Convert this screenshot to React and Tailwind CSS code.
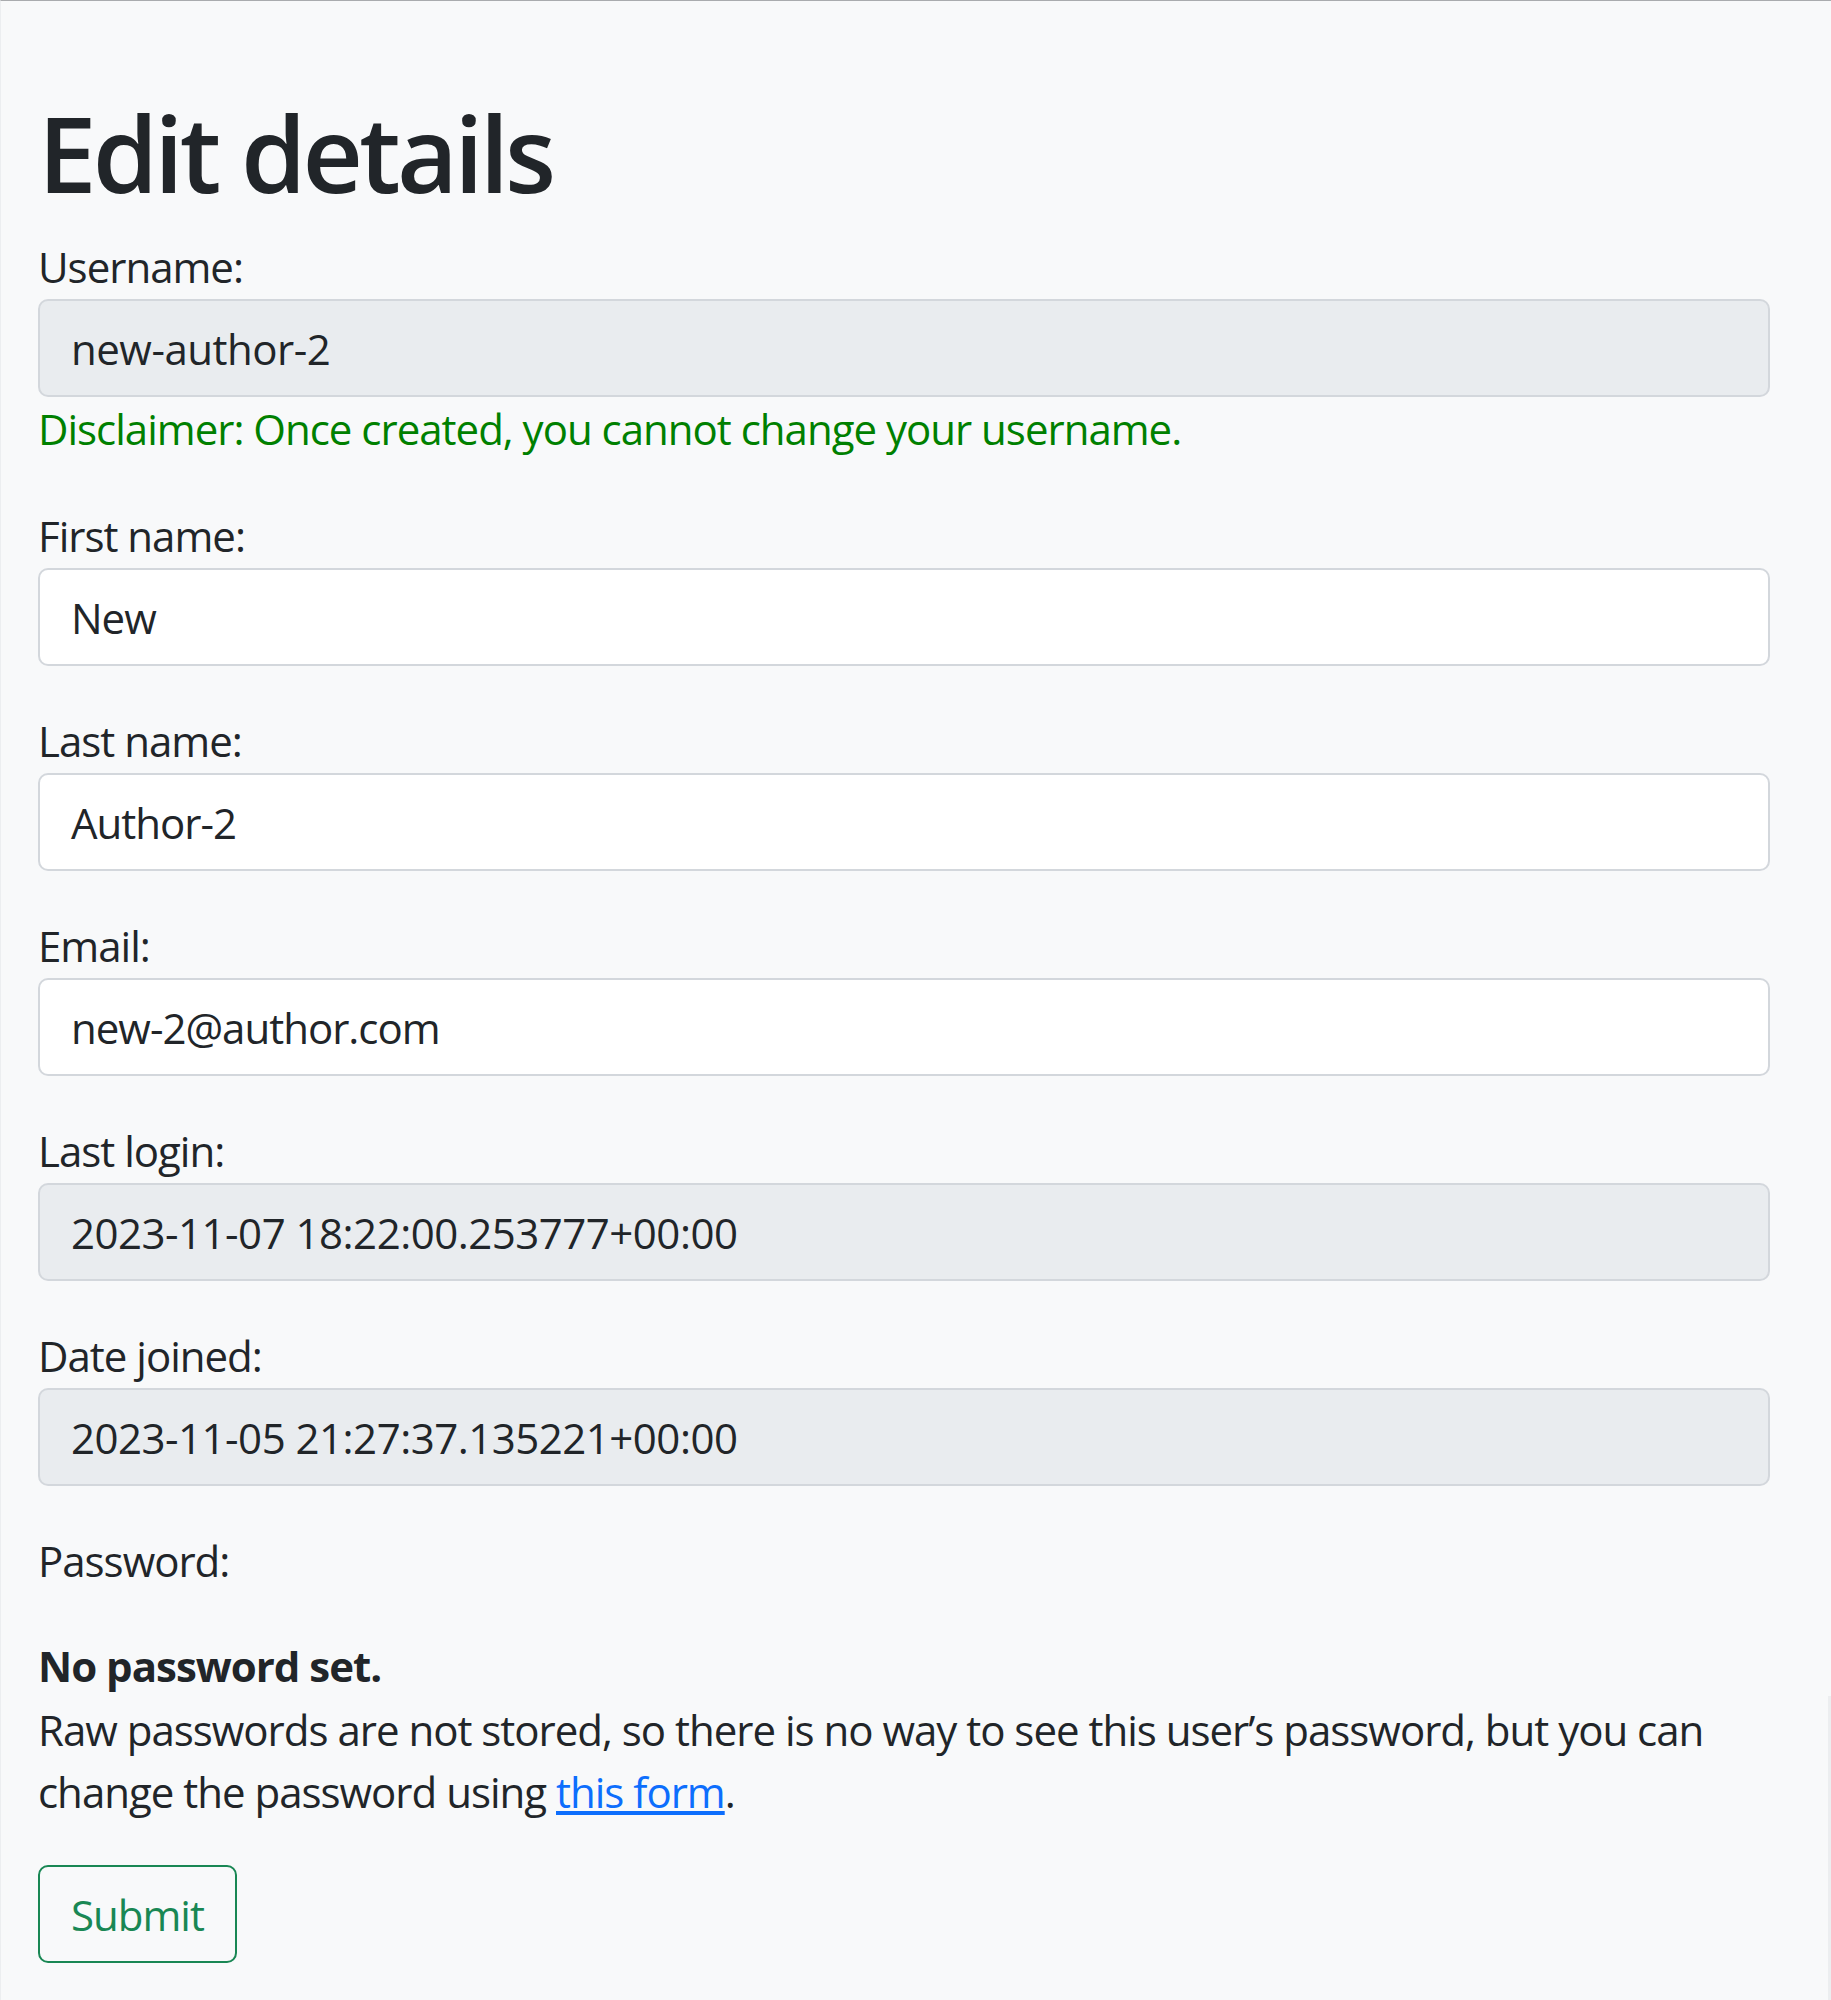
import React from "react";

const fields = [
  { label: "First name:", value: "New" },
  { label: "Last name:", value: "Author-2" },
  { label: "Email:", value: "new-2@author.com" },
  { label: "Last login:", value: "2023-11-07 18:22:00.253777+00:00", disabled: true },
  { label: "Date joined:", value: "2023-11-05 21:27:37.135221+00:00", disabled: true },
];

function Field({ label, value, disabled, className = "mb-[43px]", children }) {
  return (
    <div className={className}>
      <label className="block">{label}</label>
      <div
        className={
          "mt-px h-[98px] flex items-center px-[31px] border-2 border-[#d3d7dc] rounded-[10px] " +
          (disabled ? "bg-[#e9ecef] tracking-[-0.5px]" : "bg-white")
        }
      >
        {value}
      </div>
      {children}
    </div>
  );
}

export default function App() {
  return (
    <div className="relative min-h-screen bg-[#f8f9fa] border-t border-l border-[#a9abae] border-l-[#eceef0] text-[#212529] text-[42px] leading-[63px] tracking-[-1px] font-['Open_Sans','Noto_Sans',sans-serif]">
      {/* faint strip at the right edge */}
      <div className="absolute right-0 top-[1695px] bottom-0 w-[3px] bg-[#eceef0]" />

      <main className="pl-[37px] pr-[61px] pt-[89px] pb-[35px]">
        <h1 className="text-[105px] leading-[126px] font-semibold tracking-[-3.8px] mb-[19px]">
          Edit details
        </h1>

        <form>
          <Field label="Username:" value="new-author-2" disabled className="mb-[44px]">
            <p className="text-[#008000]">
              Disclaimer: Once created, you cannot change your username.
            </p>
          </Field>

          {fields.map((f) => (
            <Field key={f.label} {...f} />
          ))}

          <div className="mb-[42px]">
            <label className="block mb-[42px]">Password:</label>
            <p className="font-bold mb-[2px]">No password set.</p>
            <p className="leading-[62px]">
              Raw passwords are not stored, so there is no way to see this user’s password, but you can
              change the password using{" "}
              <a href="#" className="text-[#0d6efd] underline">
                this form
              </a>
              .
            </p>
          </div>

          <button
            type="button"
            className="h-[98px] px-[31px] border-2 border-[#198754] text-[#198754] rounded-[10px] leading-[63px]"
          >
            Submit
          </button>
        </form>
      </main>
    </div>
  );
}
